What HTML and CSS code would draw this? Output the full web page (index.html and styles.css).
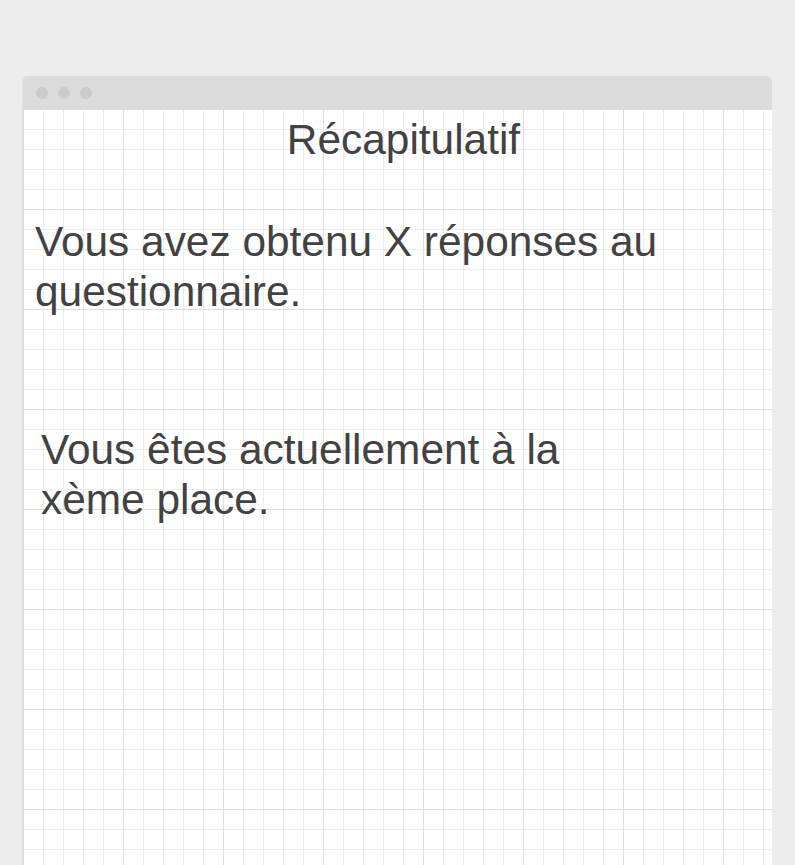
FILE: index.html
```html
<!DOCTYPE html>
<html lang="fr">
<head>
  <meta charset="UTF-8">
  <meta name="viewport" content="width=device-width, initial-scale=1.0">
  <title>Récapitulatif</title>
  <link rel="stylesheet" href="styles.css">
</head>
<body>
  <div class="fenetre">
    <div class="barre">
      <span class="point"></span>
      <span class="point"></span>
      <span class="point"></span>
    </div>
    <div class="contenu">
      <h1 class="titre">Récapitulatif</h1>
      <p class="reponses">Vous avez obtenu X réponses au questionnaire.</p>
      <p class="classement">Vous êtes actuellement à la xème place.</p>
    </div>
  </div>
</body>
</html>
```

FILE: styles.css
```css
body {
  margin: 0;
  background-color: #ededed;
  font-family: "Liberation Sans", Arial, sans-serif;
  color: #424242;
}
.fenetre {
  margin: 76px 23px 0 22px;
  border-left: 1px solid #e2e2e2;
  border-radius: 5px 5px 0 0;
  overflow: hidden;
  height: 789px;
  display: flex;
  flex-direction: column;
}
.barre {
  height: 33px;
  background-color: #dcdcdc;
  display: flex;
  align-items: center;
  gap: 10px;
  padding-left: 13px;
}
.point {
  width: 12px;
  height: 12px;
  border-radius: 50%;
  background-color: #cbcbcb;
}
.contenu {
  flex: 1;
  background-color: #fff;
  background-image:
    linear-gradient(to right, #dedede 1px, transparent 1px),
    linear-gradient(to bottom, #dedede 1px, transparent 1px),
    linear-gradient(to right, #ececec 1px, transparent 1px),
    linear-gradient(to bottom, #ececec 1px, transparent 1px);
  background-size: 100px 100px, 100px 100px, 20px 20px, 20px 20px;
  background-position: 0 0;
}
.titre {
  margin: 6px 0 0 12px;
  font-size: 42.4px;
  font-weight: normal;
  line-height: 50px;
  text-align: center;
}
.reponses {
  margin: 52px 0 0 12px;
  font-size: 42.4px;
  line-height: 50px;
}
.classement {
  margin: 108px 0 0 18px;
  width: 560px;
  font-size: 42.4px;
  line-height: 50px;
}
```
